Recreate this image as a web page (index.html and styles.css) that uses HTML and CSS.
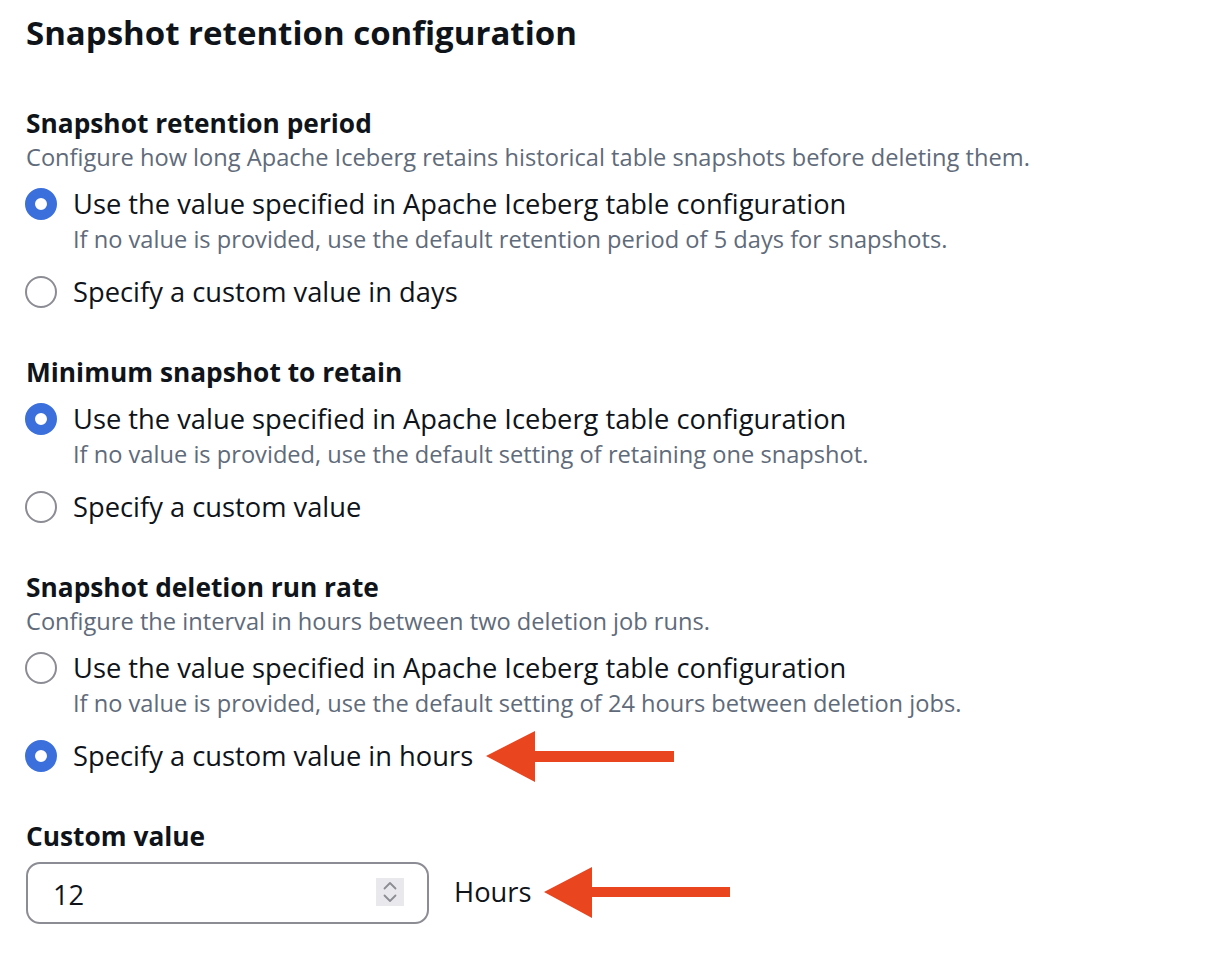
FILE: index.html
```html
<!DOCTYPE html>
<html lang="en">
<head>
  <meta charset="UTF-8">
  <meta name="viewport" content="width=device-width, initial-scale=1.0">
  <title>Snapshot retention configuration</title>
  <link rel="stylesheet" href="styles.css">
</head>
<body>

  <h1 class="title">Snapshot retention configuration</h1>

  <div class="section">
    <h3>Snapshot retention period</h3>
    <p class="desc">Configure how long Apache Iceberg retains historical table snapshots before deleting them.</p>
    <div class="radio-group">
      <div class="option">
        <div class="row"><span class="radio checked"></span><span class="label">Use the value specified in Apache Iceberg table configuration</span></div>
        <div class="sub">If no value is provided, use the default retention period of 5 days for snapshots.</div>
      </div>
      <div class="option">
        <div class="row"><span class="radio"></span><span class="label">Specify a custom value in days</span></div>
      </div>
    </div>
  </div>

  <div class="section">
    <h3>Minimum snapshot to retain</h3>
    <div class="radio-group">
      <div class="option">
        <div class="row"><span class="radio checked"></span><span class="label">Use the value specified in Apache Iceberg table configuration</span></div>
        <div class="sub">If no value is provided, use the default setting of retaining one snapshot.</div>
      </div>
      <div class="option">
        <div class="row"><span class="radio"></span><span class="label">Specify a custom value</span></div>
      </div>
    </div>
  </div>

  <div class="section">
    <h3>Snapshot deletion run rate</h3>
    <p class="desc">Configure the interval in hours between two deletion job runs.</p>
    <div class="radio-group">
      <div class="option">
        <div class="row"><span class="radio"></span><span class="label">Use the value specified in Apache Iceberg table configuration</span></div>
        <div class="sub">If no value is provided, use the default setting of 24 hours between deletion jobs.</div>
      </div>
      <div class="option">
        <div class="row">
          <span class="radio checked"></span><span class="label">Specify a custom value in hours</span>
          <svg class="arrow" width="190" height="52" viewBox="0 0 190 52"><path d="M0 25 L49 0 L49 20 L188 20 L188 31 L49 31 L49 51 Z" fill="#e9451f"/></svg>
        </div>
      </div>
    </div>
  </div>

  <div class="section">
    <h3>Custom value</h3>
    <div class="field-row">
      <div class="number-input">
        <span class="value">12</span>
        <span class="spinner">
          <svg width="28" height="28" viewBox="0 0 28 28"><path d="M8.5 10.5 L14 5 L19.5 10.5 M8.5 17.5 L14 23 L19.5 17.5" fill="none" stroke="#8c8c94" stroke-width="1.8" stroke-linecap="round" stroke-linejoin="round"/></svg>
        </span>
      </div>
      <span class="unit">Hours</span>
      <svg class="arrow" width="190" height="52" viewBox="0 0 190 52"><path d="M0 25 L48 0 L48 20 L186 20 L186 30 L48 30 L48 51 Z" fill="#e9451f"/></svg>
    </div>
  </div>

</body>
</html>
```
FILE: styles.css
```css
body {
  font-family: "Open Sans", Helvetica, sans-serif;
  color: #0f141a;
  background-color: #fff;
  margin: 0;
  padding: 0 0 0 26px;
}

.title {
  font-size: 33px;
  font-weight: 700;
  line-height: 40px;
  margin: 13px 0 0;
}

.section {
  margin-top: 45px;
}

.title + .section {
  margin-top: 53px;
}

.section h3 {
  font-size: 26.3px;
  font-weight: 700;
  line-height: 34px;
  margin: 0;
}

.desc {
  font-size: 23.65px;
  line-height: 34px;
  color: #5f6b7a;
  margin: 0;
}

.radio-group {
  margin-top: 12px;
  display: flex;
  flex-direction: column;
  gap: 18px;
}

.row {
  display: flex;
  align-items: center;
  height: 36px;
}

.radio {
  width: 32px;
  height: 32px;
  box-sizing: border-box;
  border-radius: 50%;
  border: 2px solid #8c8c94;
  margin-left: -1px;
  margin-right: 16px;
  flex-shrink: 0;
}

.radio.checked {
  border: 10px solid #3a6fdc;
}

.label {
  font-size: 27.3px;
  line-height: 36px;
}

.sub {
  font-size: 23.65px;
  line-height: 34px;
  color: #5f6b7a;
  margin-left: 47px;
}

.arrow {
  margin-left: 13px;
  margin-top: 2px;
}

.field-row {
  display: flex;
  align-items: center;
  margin-top: 9px;
}

.number-input {
  width: 403px;
  height: 62px;
  box-sizing: border-box;
  border: 2px solid #8c8c94;
  border-radius: 14px;
  display: flex;
  align-items: center;
  justify-content: space-between;
  padding: 0 23px 0 25px;
}

.number-input .value {
  font-size: 27.3px;
  margin-top: 2px;
}

.spinner {
  width: 28px;
  height: 28px;
  background-color: #e9e9ed;
  display: flex;
  margin-top: -2px;
}

.unit {
  font-size: 27.3px;
  margin-left: 25px;
  margin-top: -4px;
}

.field-row .arrow {
  margin-left: 13px;
  margin-top: 0;
}
```
